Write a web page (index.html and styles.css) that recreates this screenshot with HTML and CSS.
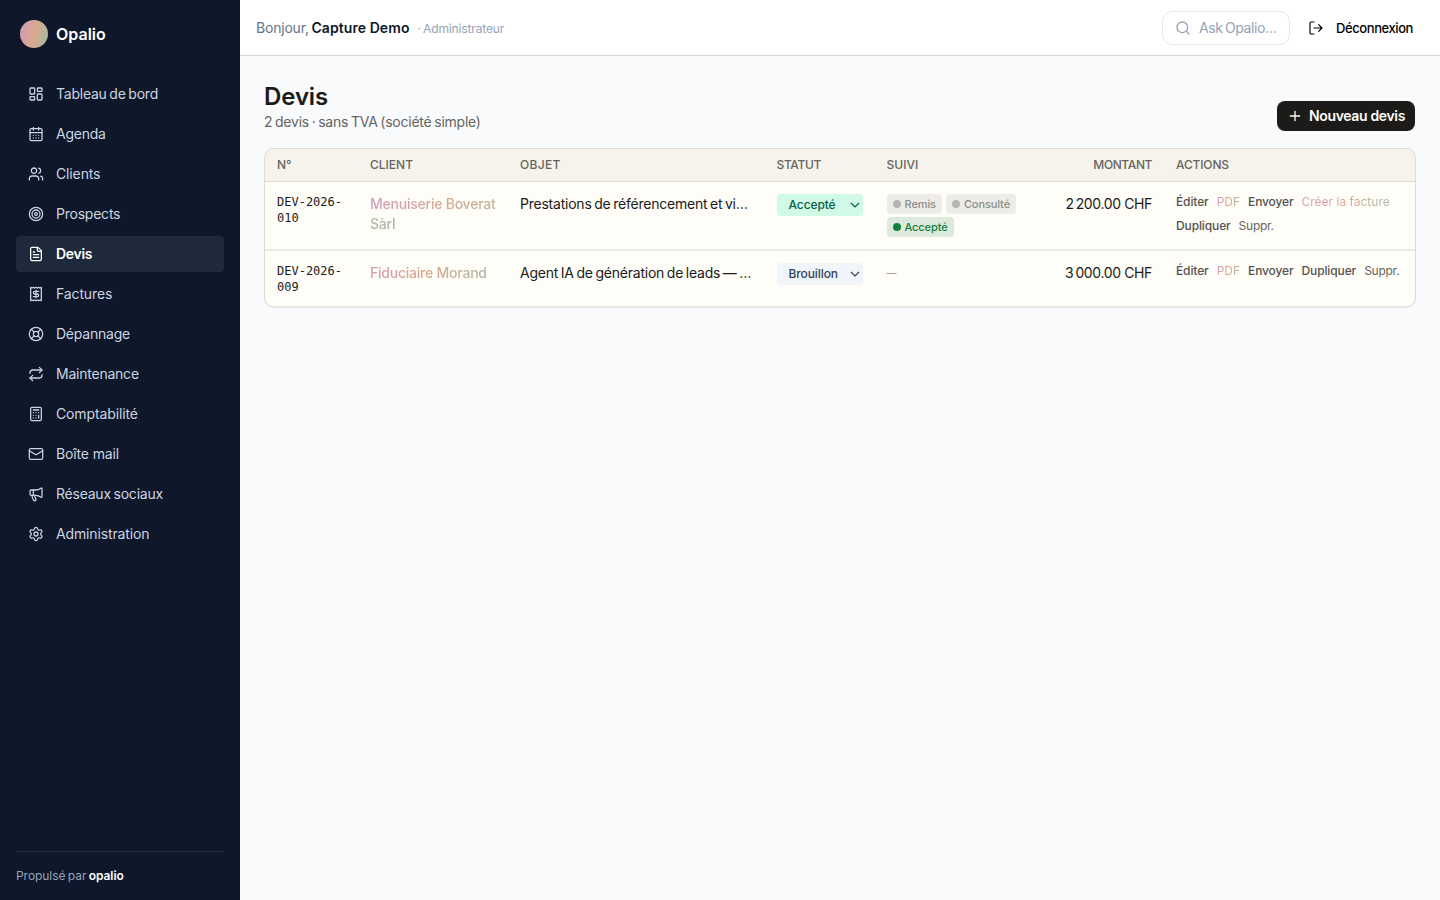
FILE: index.html
```html
<!DOCTYPE html>
<html lang="fr">
<head>
<meta charset="utf-8">
<title>Devis · Opalio</title>
<link rel="stylesheet" href="styles.css">
</head>
<body>
<div class="app">
  <aside class="sidebar">
    <div class="brand"><span class="brand-mark"></span><span class="brand-name">Opalio</span></div>
    <nav class="nav">
      <a class="nav-item"><svg class="icon" viewBox="0 0 24 24"><rect width="7" height="9" x="3" y="3" rx="1"/><rect width="7" height="5" x="14" y="3" rx="1"/><rect width="7" height="9" x="14" y="12" rx="1"/><rect width="7" height="5" x="3" y="16" rx="1"/></svg><span>Tableau de bord</span></a>
      <a class="nav-item"><svg class="icon" viewBox="0 0 24 24"><path d="M8 2v4M16 2v4"/><rect width="18" height="18" x="3" y="4" rx="2"/><path d="M3 10h18M8 14h.01M12 14h.01M16 14h.01M8 18h.01M12 18h.01M16 18h.01"/></svg><span>Agenda</span></a>
      <a class="nav-item nav-item-loose"><svg class="icon" viewBox="0 0 24 24"><path d="M16 21v-2a4 4 0 0 0-4-4H6a4 4 0 0 0-4 4v2"/><circle cx="9" cy="7" r="4"/><path d="M22 21v-2a4 4 0 0 0-3-3.87M16 3.13a4 4 0 0 1 0 7.75"/></svg><span>Clients</span></a>
      <a class="nav-item"><svg class="icon" viewBox="0 0 24 24"><circle cx="12" cy="12" r="10"/><circle cx="12" cy="12" r="6"/><circle cx="12" cy="12" r="2"/></svg><span>Prospects</span></a>
      <a class="nav-item nav-item-active"><svg class="icon" viewBox="0 0 24 24"><path d="M15 2H6a2 2 0 0 0-2 2v16a2 2 0 0 0 2 2h12a2 2 0 0 0 2-2V7Z"/><path d="M14 2v4a2 2 0 0 0 2 2h4M10 9H8M16 13H8M16 17H8"/></svg><span>Devis</span></a>
      <a class="nav-item nav-item-loose"><svg class="icon" viewBox="0 0 24 24"><path d="M4 2v20l2-1 2 1 2-1 2 1 2-1 2 1 2-1 2 1V2l-2 1-2-1-2 1-2-1-2 1-2-1-2 1Z"/><path d="M16 8h-6a2 2 0 1 0 0 4h4a2 2 0 1 1 0 4H8M12 17.5v-11"/></svg><span>Factures</span></a>
      <a class="nav-item"><svg class="icon" viewBox="0 0 24 24"><circle cx="12" cy="12" r="10"/><path d="m4.93 4.93 4.24 4.24M14.83 9.17l4.24-4.24M14.83 14.83l4.24 4.24M9.17 14.83l-4.24 4.24"/><circle cx="12" cy="12" r="4"/></svg><span>Dépannage</span></a>
      <a class="nav-item"><svg class="icon" viewBox="0 0 24 24"><path d="m17 2 4 4-4 4"/><path d="M3 11v-1a4 4 0 0 1 4-4h14"/><path d="m7 22-4-4 4-4"/><path d="M21 13v1a4 4 0 0 1-4 4H3"/></svg><span>Maintenance</span></a>
      <a class="nav-item nav-item-loose"><svg class="icon" viewBox="0 0 24 24"><rect width="16" height="20" x="4" y="2" rx="2"/><path d="M8 6h8M16 14v4M16 10h.01M12 10h.01M8 10h.01M12 14h.01M8 14h.01M12 18h.01M8 18h.01"/></svg><span>Comptabilité</span></a>
      <a class="nav-item nav-item-loose"><svg class="icon" viewBox="0 0 24 24"><path d="m22 7-8.99 5.73a2 2 0 0 1-2.01 0L2 7"/><rect width="20" height="16" x="2" y="4" rx="2"/></svg><span>Boîte mail</span></a>
      <a class="nav-item"><svg class="icon" viewBox="0 0 24 24"><path d="M11 6a13 13 0 0 0 8.4-2.8A1 1 0 0 1 21 4v12a1 1 0 0 1-1.6.8A13 13 0 0 0 11 14H5a2 2 0 0 1-2-2V8a2 2 0 0 1 2-2z"/><path d="M6 14a12 12 0 0 0 2.4 7.2 2 2 0 0 0 3.2-2.4A8 8 0 0 1 10 14M8 6v8"/></svg><span>Réseaux sociaux</span></a>
      <a class="nav-item nav-item-loose"><svg class="icon" viewBox="0 0 24 24"><path d="M9.671 4.136a2.34 2.34 0 0 1 4.659 0 2.34 2.34 0 0 0 3.319 1.915 2.34 2.34 0 0 1 2.33 4.033 2.34 2.34 0 0 0 0 3.831 2.34 2.34 0 0 1-2.33 4.033 2.34 2.34 0 0 0-3.319 1.915 2.34 2.34 0 0 1-4.659 0 2.34 2.34 0 0 0-3.32-1.915 2.34 2.34 0 0 1-2.33-4.033 2.34 2.34 0 0 0 0-3.831A2.34 2.34 0 0 1 6.35 6.051a2.34 2.34 0 0 0 3.319-1.915"/><circle cx="12" cy="12" r="3"/></svg><span>Administration</span></a>
    </nav>
    <div class="powered">Propulsé par <strong>opalio</strong></div>
  </aside>
  <div class="content">
    <header class="topbar">
      <div class="greeting">Bonjour, <strong>Capture Demo</strong><span class="role">· Administrateur</span></div>
      <div class="topbar-actions">
        <button class="ask"><svg class="icon" viewBox="0 0 24 24"><circle cx="11" cy="11" r="8"/><path d="m21 21-4.3-4.3"/></svg><span>Ask Opalio…</span></button>
        <button class="logout"><svg class="icon" viewBox="0 0 24 24"><path d="m16 17 5-5-5-5M21 12H9M9 21H5a2 2 0 0 1-2-2V5a2 2 0 0 1 2-2h4"/></svg><span>Déconnexion</span></button>
      </div>
    </header>
    <main class="main">
      <div class="page-head">
        <div>
          <h1 class="title">Devis</h1>
          <p class="subtitle">2 devis · sans TVA (société simple)</p>
        </div>
        <button class="new-quote"><svg class="icon" viewBox="0 0 24 24"><path d="M5 12h14M12 5v14"/></svg><span>Nouveau devis</span></button>
      </div>
      <section class="table">
        <div class="row row-head">
          <div>N°</div><div>CLIENT</div><div class="subject-head">OBJET</div><div class="status-head">STATUT</div><div>SUIVI</div><div class="amount-head">MONTANT</div><div class="actions-head">ACTIONS</div>
        </div>
        <div class="row row-first">
          <div class="number">DEV-2026-<br>010</div>
          <div><a class="client opal">Menuiserie Boverat<br>Sàrl</a></div>
          <div class="subject">Prestations de référencement et vi…</div>
          <div><span class="status status-accepted">Accepté<svg class="chevron" viewBox="0 0 10 6"><path d="M1 1l4 4 4-4"/></svg></span></div>
          <div class="chips"><span class="chip">Remis</span><span class="chip">Consulté</span><span class="chip chip-done">Accepté</span></div>
          <div class="amount">2<span class="thousands"></span>200.00 CHF</div>
          <div class="actions"><a>Éditer</a><a class="opal pdf">PDF</a><a>Envoyer</a><a class="opal invoice">Créer la facture</a><a>Dupliquer</a><a class="delete">Suppr.</a></div>
        </div>
        <div class="row row-second">
          <div class="number">DEV-2026-<br>009</div>
          <div><a class="client opal">Fiduciaire Morand</a></div>
          <div class="subject">Agent IA de génération de leads — …</div>
          <div><span class="status status-draft">Brouillon<svg class="chevron" viewBox="0 0 10 6"><path d="M1 1l4 4 4-4"/></svg></span></div>
          <div class="empty">—</div>
          <div class="amount">3<span class="thousands"></span>000.00 CHF</div>
          <div class="actions"><a>Éditer</a><a class="opal pdf">PDF</a><a>Envoyer</a><a>Dupliquer</a><a class="delete">Suppr.</a></div>
        </div>
      </section>
    </main>
  </div>
</div>
</body>
</html>
```
FILE: styles.css
```css
* { box-sizing: border-box; }
body { margin: 0; font-family: Inter, "Liberation Sans", sans-serif; font-size: 14px; line-height: 20px; color: #1c1b19; background: #f8fafc; }
button { font: inherit; border: 0; margin: 0; background: none; }
h1, p { margin: 0; }
span, a { white-space: nowrap; }
.icon { width: 16px; height: 16px; flex: none; fill: none; stroke: currentColor; stroke-width: 2; stroke-linecap: round; stroke-linejoin: round; }
.app { display: flex; width: 1440px; height: 900px; overflow: hidden; }

.sidebar { display: flex; flex-direction: column; width: 240px; flex: none; padding: 16px; background: #0f172a; color: #cbd5e1; }
.brand { display: flex; align-items: center; gap: 8px; height: 36px; padding: 0 4px; color: #fff; }
.brand-mark { width: 28px; height: 28px; border-radius: 50%; background: linear-gradient(105deg, #cf9cb9 8%, #dba88c 50%, #a3b9a4 95%); }
.brand-name { font-size: 16px; font-weight: 600; letter-spacing: 0; }
.nav { display: flex; flex-direction: column; gap: 4px; margin-top: 24px; }
.nav-item { display: flex; align-items: center; gap: 12px; height: 36px; padding: 0 12px; border-radius: 4px; letter-spacing: -.23px; word-spacing: -1px; }
.nav-item-loose { letter-spacing: -.13px; word-spacing: 0; }
.nav-item .icon { stroke-width: 1.9; }
.nav-item-active { background: #1e293b; color: #fff; font-weight: 600; letter-spacing: -.3px; }
.powered { margin-top: auto; padding: 16px 0 0; height: 49px; border-top: 1px solid #1e293b; font-size: 12px; line-height: 16px; color: #94a3b8; margin-bottom: -16px; word-spacing: -1px; letter-spacing: -.05px; }
.powered strong { color: #fff; font-weight: 600; }

.content { flex: 1; min-width: 0; display: flex; flex-direction: column; }
.topbar { display: flex; align-items: center; justify-content: space-between; height: 56px; padding: 0 27px 0 16px; background: #fff; border-bottom: 1px solid #d9d8d1; }
.greeting { padding-top: 1px; color: #64748b; letter-spacing: -.2px; word-spacing: -1px; }
.greeting strong { color: #0f172a; font-weight: 600; letter-spacing: .07px; word-spacing: 0; }
.role { margin-left: 8px; font-size: 12px; color: #94a3b8; letter-spacing: -.13px; }
.topbar-actions { display: flex; align-items: center; gap: 18px; }
.ask { display: flex; align-items: center; gap: 8px; width: 128px; height: 34px; padding: 0 0 0 12px; border: 1.5px solid #e6e5df; border-radius: 10px; color: #94a3b8; letter-spacing: -.42px; word-spacing: -1px; }
.logout { display: flex; align-items: center; gap: 12px; padding: 0; font-size: 13px; font-weight: 500; letter-spacing: -.42px; }
.logout .icon { stroke-width: 1.75; }

.main { padding: 24px; }
.page-head { display: flex; justify-content: space-between; align-items: flex-end; }
.title { font-size: 24px; line-height: 33px; font-weight: 600; letter-spacing: -.1px; }
.subtitle { margin-top: -1px; padding-bottom: 1px; line-height: 19px; color: #66645f; letter-spacing: -.23px; word-spacing: -1px; }
.new-quote { display: flex; align-items: center; gap: 6px; width: 138px; height: 30px; margin: 0 1px 1px 0; padding: 0 10px; border-radius: 8px; background: #1c1b19; color: #fdfcf7; font-weight: 600; letter-spacing: -.35px; }

.table { margin-top: 16px; overflow: hidden; border: 1px solid #dbdad3; border-bottom: 2px solid #e6e6e1; border-radius: 10px; background: #fefdf8; }
.row { display: grid; grid-template-columns: 93px 150px 256.5px 110px 179px 110.5px 251px; }
.row > div { padding: 12px 0 0 12px; }
.row-head { height: 33px; border-bottom: 1px solid #dbdad3; background: #f6f3ec; font-size: 12px; line-height: 16px; font-weight: 500; color: #66645f; }
.row-head > div { padding-top: 8px; }
.subject-head { letter-spacing: .35px; }
.status-head { letter-spacing: -.35px; }
.amount-head { letter-spacing: -.4px; }
.actions-head { letter-spacing: -.15px; }
.row-first { height: 69px; border-bottom: 2px solid #eae9e3; }
.row-second { height: 55px; }
.number { font-family: "DejaVu Sans Mono", "Liberation Mono", monospace; font-size: 12px; line-height: 16px; }
.opal { color: transparent; background: linear-gradient(105deg, #cf9cb9, #dba88c 50%, #a3b9a4); -webkit-background-clip: text; background-clip: text; }
.client { font-weight: 500; letter-spacing: -.23px; }
.subject { white-space: nowrap; letter-spacing: -.23px; word-spacing: -1px; }
.row > .amount, .row > .amount-head { padding-left: 0; padding-right: 12px; text-align: right; }
.amount { letter-spacing: -.37px; }
.thousands { display: inline-block; width: 2px; }
.status { display: flex; align-items: center; justify-content: space-between; width: 86px; height: 22px; padding: 0 3px 0 12px; border-radius: 4px; font-size: 12px; font-weight: 500; letter-spacing: -.1px; }
.status-accepted { background: #d0fae5; color: #065f46; }
.status-draft { background: #f1f5f9; color: #314158; }
.chevron { width: 10px; height: 6px; fill: none; stroke: currentColor; stroke-width: 1.2; }
.chips { display: flex; flex-wrap: wrap; align-content: flex-start; gap: 3px 4px; }
.chip { display: flex; align-items: center; gap: 4px; height: 20px; padding: 0 6px; border-radius: 4px; background: #edece8; color: #8e8c88; font-size: 11px; font-weight: 500; letter-spacing: -.1px; }
.chip::before { content: ""; width: 8px; height: 8px; border-radius: 50%; background: #b5b5b3; }
.chip-done { background: #dce9dc; color: #15803d; }
.chip-done::before { background: #15803d; }
.empty { color: #8e8c88; font-size: 10px; }
.actions { display: flex; flex-wrap: wrap; align-content: flex-start; gap: 8px; font-size: 12px; line-height: 16px; font-weight: 500; letter-spacing: -.12px; color: #55534f; }
.delete { font-weight: 400; letter-spacing: -.25px; color: #66645f; }
.pdf, .invoice { font-weight: 400; letter-spacing: 0; }
```
